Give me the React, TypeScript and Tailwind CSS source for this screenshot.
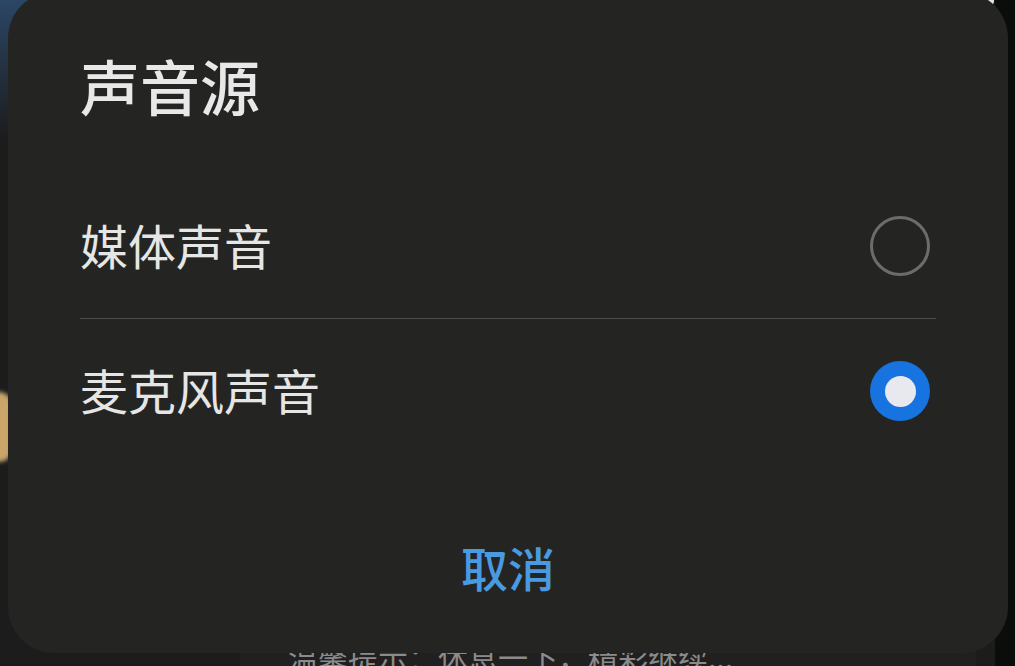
import React, { useState } from 'react';

const FONT = { fontFamily: '"Noto Sans CJK SC", "Noto Sans", sans-serif' };

interface OptionRowProps {
    label: string;
    selected: boolean;
    onSelect: () => void;
}

const OptionRow: React.FC<OptionRowProps> = ({ label, selected, onSelect }) => (
    <button onClick={onSelect} className="flex items-center justify-between h-[144px] w-full text-left">
        <span className="text-[48px] leading-none text-[#e6e6e6] -mt-[4px]">{label}</span>
        {selected ? (
            <span className="mr-[6px] w-[60px] h-[60px] rounded-full bg-[#1673e0] flex items-center justify-center">
                <span className="w-[31px] h-[31px] rounded-full bg-[#e8e9ee]" />
            </span>
        ) : (
            <span className="mr-[6px] w-[60px] h-[60px] rounded-full border-[3px] border-[#6c6c6c]" />
        )}
    </button>
);

export default function App() {
    const [source, setSource] = useState<'media' | 'mic'>('mic');

    return (
        <div className="relative w-[1015px] h-[666px] overflow-hidden bg-[#1b1c1b]" style={FONT}>
            {/* background peeking out behind the sheet */}
            <div className="absolute left-0 top-0 w-[40px] h-[140px] bg-gradient-to-b from-[#2b4666] to-[#1b1c1b]" />
            <div className="absolute left-[28px] -top-[6px] w-[22px] h-[10px] rounded-full bg-[#e8eaee]" />
            <div className="absolute left-[968px] -top-[4px] w-[26px] h-[10px] rounded-full bg-[#e3e3e3]" />
            <div className="absolute right-0 top-0 w-[20px] h-[666px] bg-[#0b0d0b]" />
            <div className="absolute -left-[14px] top-[392px] w-[26px] h-[70px] rounded-full bg-[#c9a56a] blur-[2px]" />
            <div className="absolute left-[240px] top-[600px] w-[736px] h-[66px] bg-[#1f201f]" />
            <div className="absolute left-[288px] top-[641px] text-[30px] leading-none text-[#8a8b8a] whitespace-nowrap">
                温馨提示：休息一下，精彩继续...
            </div>

            <div className="relative ml-[8px] -mt-[8px] w-[1000px] h-[661px] rounded-[46px] bg-[#242523] flex flex-col px-[72px]">
                <h2 className="mt-[63px] text-[60px] leading-none text-[#e8e8e8] font-medium">声音源</h2>
                <div className="mt-[59px] flex flex-col">
                    <OptionRow label="媒体声音" selected={source === 'media'} onSelect={() => setSource('media')} />
                    <div className="h-px bg-[#4b4c4b]" />
                    <OptionRow label="麦克风声音" selected={source === 'mic'} onSelect={() => setSource('mic')} />
                </div>
                <div className="flex justify-center mt-[80px]">
                    <button className="text-[47px] leading-none font-medium text-[#4a9ae2]">取消</button>
                </div>
            </div>
        </div>
    );
}
